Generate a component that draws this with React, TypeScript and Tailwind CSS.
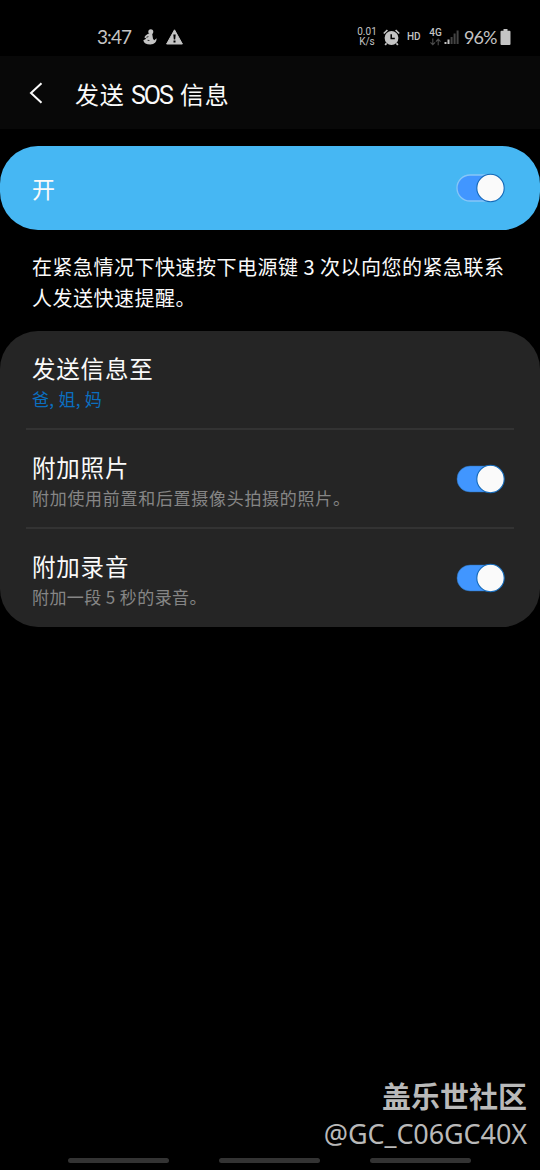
import React, { useState } from "react";
import clsx from "clsx";

const Toggle = ({ checked, onChange, outlined }: any) => {
  return (
    <button
      type="button"
      role="switch"
      aria-checked={checked}
      onClick={() => onChange(!checked)}
      className="flex h-[30px] w-[49px] shrink-0 items-center">
      <svg viewBox="0 0 49 30" className="h-[30px] w-[49px]">
        <rect
          x="1"
          y="2"
          width="46"
          height="26"
          rx="13"
          fill={checked ? "#4196ff" : "#6b6b6b"}
          stroke={outlined ? "#86c6f8" : "#2c6fae"}
          strokeWidth={outlined ? 1.3 : 0.5}
        />
        <circle
          cx={checked ? 34.5 : 15}
          cy="15"
          r="13.7"
          fill="#fafafa"
          stroke="#1268b8"
          strokeWidth="1.1"
        />
      </svg>
    </button>
  );
};

const StatusBar = () => {
  return (
    <div className="flex h-14 shrink-0 items-start justify-between pt-[26px] pr-7 pl-[97px] text-[#c4c4c4]">
      <div className="flex h-[22px] items-center">
        <span className="w-[43px] font-['Lato'] text-[19px] leading-[22px] tracking-[-0.9px] whitespace-nowrap">
          3:47
        </span>
        <svg viewBox="0 0 14 16" className="ml-[3px] h-4 w-[14px]" fill="currentColor">
          <circle cx="7.8" cy="2.7" r="2.5" />
          <path d="M5.2 4.7 9.2 4.8 10 9.7 11.2 11.3 13.7 9.3Q13.6 15 7.3 15.6 1.2 15.6.3 11.2L3.3 9.8 1.3 8.3Q2.5 6 5.2 4.7Z" />
          <path d="m3.4 8.3 2-.7M4.6 11.3l1.8.2" stroke="#000" strokeWidth=".8" />
        </svg>
        <svg viewBox="0 0 17 16" className="ml-[9px] h-4 w-[17px]">
          <path d="M8.5.8 16.4 15H.6Z" fill="currentColor" stroke="currentColor" strokeWidth="1" strokeLinejoin="round" />
          <path d="M7.3 5.5h2.4l-.5 5H7.8ZM7.5 11.6h2v1.8h-2Z" fill="#000" />
        </svg>
      </div>

      <div className="flex h-[22px] items-center">
        <div className="flex w-[20px] flex-col items-center font-['Roboto'] text-[10px] leading-[10px]">
          <div className="h-[10px]">0.01</div>
          <div className="h-[10px]">K/s</div>
        </div>
        <svg viewBox="0 0 17 17" className="ml-[6px] h-[17px] w-[17px]">
          <circle cx="8.5" cy="9" r="6.9" fill="currentColor" />
          <path d="M.8 4.5 4.4 1M16.2 4.5 12.6 1M3.5 14.2l-1.3 1.9M13.5 14.2l1.3 1.9" stroke="currentColor" strokeWidth="1.7" fill="none" />
          <path d="M8.2 5.3v4.3h3.6" stroke="#000" strokeWidth="1.5" fill="none" />
        </svg>
        <span className="ml-[7px] w-[15px] font-['Roboto'] text-[10px] leading-[12px] font-medium">
          HD
        </span>
        <div className="ml-[7px] flex h-[18px] w-[13px] flex-col items-center">
          <span className="font-['Roboto'] text-[10px] leading-[9px] font-medium">4G</span>
          <svg viewBox="0 0 11 8" className="mt-[1px] h-2 w-[11px]" fill="none" stroke="#4b4b4b" strokeWidth="1.1">
            <path d="M2.8.5v6M.5 4.3l2.3 2.5 2.3-2.5M8.2 7.3v-6M5.9 3.6 8.2 1.1l2.3 2.5" />
          </svg>
        </div>
        <svg viewBox="0 0 15 15" className="ml-[2px] h-[15px] w-[15px]">
          <path d="M.5 12h2v2h-2ZM3.5 9.5h2V14h-2Z" fill="#c4c4c4" />
          <path d="M6.6 7h2v7h-2ZM9.6 3.5h2V14h-2ZM12.6.5h2V14h-2Z" fill="#444" />
        </svg>
        <span className="ml-[5px] w-[34px] font-['Lato'] text-[18px] leading-[22px] tracking-[-1px] whitespace-nowrap">
          96%
        </span>
        <svg viewBox="0 0 10 16" className="mr-[1px] ml-[2px] h-4 w-[11px]" fill="currentColor">
          <path d="M3 0h4v1.7h2q1 0 1 1V15q0 1-1 1H1q-1 0-1-1V2.7q0-1 1-1h2Z" />
        </svg>
      </div>
    </div>
  );
};

const SettingRow = ({ title, children, subClass, toggle }: any) => {
  return (
    <div className="flex h-[97px] items-center justify-between pr-[9px] pl-[6px]">
      <div className="pt-[3px]">
        <div className="text-[23.5px] leading-[34px] tracking-[0.8px]">{title}</div>
        <div className={clsx("h-[27px] text-[17px] leading-[27px]", subClass)}>{children}</div>
      </div>
      {toggle}
    </div>
  );
};

const App = () => {
  const [enabled, setEnabled] = useState(true);
  const [photos, setPhotos] = useState(true);
  const [audio, setAudio] = useState(true);

  return (
    <div className="relative flex h-[1170px] w-[540px] flex-col overflow-hidden bg-black font-['Noto_Sans_CJK_SC',sans-serif] text-[#fafafa]">
      <StatusBar />

      <header className="flex h-[73px] shrink-0 items-center bg-[#080808] pt-[1px] pl-[29px]">
        <svg viewBox="0 0 14 22" className="h-[22px] w-[14px]" fill="none" stroke="currentColor" strokeWidth="2">
          <path d="M12.5 1.2 2 11l10.5 9.8" />
        </svg>
        <h1 className="ml-[32px] flex items-baseline pt-[3px] text-[24px] leading-[36px] whitespace-nowrap">
          <span className="w-[56px] tracking-[0.8px]">发送</span>
          <span className="w-[49px] font-['Roboto'] text-[25px] tracking-[-2px]">SOS</span>
          <span className="tracking-[0.8px]">信息</span>
        </h1>
      </header>

      <div className="mt-[16.5px] flex h-[84px] shrink-0 items-center justify-between rounded-[38px] bg-[#46b7f3] pr-[35px] pl-8">
        <span className="text-[23px] leading-[34px]">开</span>
        <Toggle checked={enabled} onChange={setEnabled} outlined />
      </div>

      <p className="mt-[21.5px] h-[80px] shrink-0 pl-[32px] text-[20px] leading-[31px] tracking-[0.5px] whitespace-nowrap">
        在紧急情况下快速按下电源键 3 次以向您的紧急联系
        <br />
        人发送快速提醒。
      </p>

      <section className="h-[296px] shrink-0 rounded-[38px] bg-[#252525] px-[26px]">
        <SettingRow title="发送信息至" subClass="text-[#0b6fc0] tracking-[0.3px]">
          爸, 姐, 妈
        </SettingRow>
        <div className="h-[2px] bg-[#333333]" />
        <SettingRow
          title="附加照片"
          subClass="text-[#868686] tracking-[0.7px]"
          toggle={<Toggle checked={photos} onChange={setPhotos} />}>
          附加使用前置和后置摄像头拍摄的照片。
        </SettingRow>
        <div className="h-[2px] bg-[#333333]" />
        <SettingRow
          title="附加录音"
          subClass="text-[#868686] tracking-[0.4px]"
          toggle={<Toggle checked={audio} onChange={setAudio} />}>
          附加一段 5 秒的录音。
        </SettingRow>
      </section>

      <nav className="mt-auto flex gap-[50px] pb-[7px] pl-[68px]">
        <div className="h-[5px] w-[101px] rounded-full bg-[#333333]" />
        <div className="h-[5px] w-[101px] rounded-full bg-[#333333]" />
        <div className="h-[5px] w-[101px] rounded-full bg-[#333333]" />
      </nav>

      {/* community watermark */}
      <div className="absolute right-[13px] bottom-[17px] text-right whitespace-nowrap text-[#b9b9b9]">
        <div className="text-[29px] leading-[40px] font-bold">盖乐世社区</div>
        <div className="font-['Noto_Sans'] text-[27px] leading-[38px] tracking-[-0.1px]">@GC_C06GC40X</div>
      </div>
    </div>
  );
};

export default App;
